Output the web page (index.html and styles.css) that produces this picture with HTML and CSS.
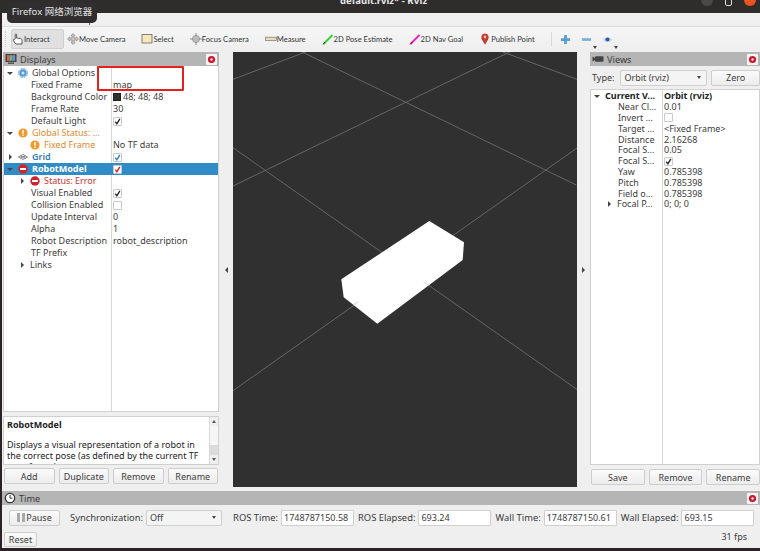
FILE: index.html
```html
<!DOCTYPE html>
<html lang="en">
<head>
<meta charset="utf-8">
<title>default.rviz* - RViz</title>
<link rel="stylesheet" href="styles.css">
</head>
<body>
<svg class="defs" width="0" height="0">
  <defs>
    <symbol id="chk" viewBox="0 0 10 10"><path d="M2.5 5.2 4.3 7.6 7.6 2" fill="none" stroke="currentColor" stroke-width="1.5"/></symbol>
    <symbol id="warn" viewBox="0 0 10 10"><circle cx="5" cy="5" r="4.6" fill="#ee9b2c"/><rect x="4.3" y="2" width="1.4" height="3.8" fill="#fff"/><rect x="4.3" y="6.6" width="1.4" height="1.4" fill="#fff"/></symbol>
    <symbol id="err" viewBox="0 0 10 10"><circle cx="5" cy="5" r="4.7" fill="#d3232a"/><rect x="2" y="4" width="6" height="2" fill="#fff"/></symbol>
    <symbol id="close" viewBox="0 0 11 11"><rect width="11" height="11" rx="1" fill="#f4f4f4"/><circle cx="5.5" cy="5.5" r="3.6" fill="#d3142a"/><circle cx="5.5" cy="5.5" r="1.2" fill="#f4f4f4"/></symbol>
  </defs>
</svg>
<div class="window">
  <header class="titlebar">
    <span class="title">default.rviz* - RViz</span>
    <span class="wbtn wmin"></span>
    <span class="wbtn wmax"></span>
    <span class="wbtn wclose"></span>
  </header>
  <nav class="menubar"><span>File</span><span>Panels</span><span>Help</span></nav>
  <div class="toolbar">
    <span class="grip"></span>
    <div class="tool pressed">
      <svg class="ticon" viewBox="0 0 12 12"><path d="M3.2 6V1.7c0-1 1.4-1 1.4 0V5l3.9.6c1 .2 1.5.8 1.5 1.7V11H3.8L1.4 7.6c-.5-.9.5-1.6 1.1-1Z" fill="#fff" stroke="#333" stroke-width=".8"/></svg>
      <span>Interact</span>
    </div>
    <div class="tool">
      <svg class="ticon" viewBox="0 0 12 12"><path d="M6 .5 8 2.6H7V5h2.400V4l2.100 2-2.100 2V7H7v2.400h1l-2 2.100-2-2.100h1V7H2.600v1L.5 6l2.100-2v1H5V2.600H4Z" fill="#c9c9c9" stroke="#777" stroke-width=".6"/></svg>
      <span>Move Camera</span>
    </div>
    <div class="tool">
      <svg class="ticon" viewBox="0 0 12 12"><rect x="1" y="1.500" width="10" height="8.500" fill="#f6e6b8" stroke="#555" stroke-width=".7"/></svg>
      <span>Select</span>
    </div>
    <div class="tool">
      <svg class="ticon" viewBox="0 0 12 12"><circle cx="6" cy="6" r="3.600" fill="#bbb" stroke="#888" stroke-width=".6"/><path d="M6 0v3M6 9v3M0 6h3M9 6h3" stroke="#888"/></svg>
      <span>Focus Camera</span>
    </div>
    <div class="tool">
      <svg class="ticon" viewBox="0 0 12 12"><rect x=".5" y="4.200" width="11" height="3.400" fill="#e9dcb4" stroke="#777" stroke-width=".7"/></svg>
      <span>Measure</span>
    </div>
    <div class="tool">
      <svg class="ticon" viewBox="0 0 12 12"><path d="M1.500 11 10.500 2" stroke="#2ed12e" stroke-width="1.800"/><path d="M1 11.500 3 9" stroke="#222" stroke-width=".8"/></svg>
      <span>2D Pose Estimate</span>
    </div>
    <div class="tool">
      <svg class="ticon" viewBox="0 0 12 12"><path d="M1.500 11 10.500 2" stroke="#f01cc4" stroke-width="1.800"/><path d="M1 11.500 3 9" stroke="#222" stroke-width=".8"/></svg>
      <span>2D Nav Goal</span>
    </div>
    <div class="tool pin">
      <svg class="ticon" viewBox="0 0 12 12"><path d="M6 11.800 2.800 6.200C1.500 3.500 3.300.5 6 .5s4.500 3 3.200 5.700Z" fill="#c53a30"/><circle cx="6" cy="4" r="1.400" fill="#eec0a8"/></svg>
      <span>Publish Point</span>
    </div>
    <span class="tsep"></span>
    <svg class="vbtn" viewBox="0 0 12 12"><path d="M4.500 1h3v3.500H11v3H7.500V11h-3V7.500H1v-3h3.500Z" fill="#5b9bd3"/></svg>
    <span class="vdrop">
      <svg class="vbtn" viewBox="0 0 12 12"><rect x="1" y="4.500" width="10" height="3" fill="#7fb0da"/></svg>
      <i class="tri"></i>
    </span>
    <span class="vdrop">
      <svg class="vbtn" viewBox="0 0 12 12"><path d="M.5 6C3 2.300 9 2.300 11.500 6 9 9.700 3 9.700.5 6Z" fill="#cfdff0"/><circle cx="6" cy="6" r="2.300" fill="#2b5f9e"/></svg>
      <i class="tri"></i>
    </span>
  </div>

  <main class="middle">
    <section class="dock left">
      <div class="dockhead">
        <svg class="hicon" viewBox="0 0 12 12"><rect x=".5" y="1" width="11" height="8" fill="#444"/><rect x="2" y="2.200" width="2.700" height="5.600" fill="#e35d5d"/><rect x="4.700" y="2.200" width="2.700" height="5.600" fill="#6dbb6d"/><rect x="7.400" y="2.200" width="2.700" height="5.600" fill="#6d8fd0"/><rect x="3" y="9.500" width="6" height="1.500" fill="#555"/></svg>
        <span class="dtitle">Displays</span>
        <svg class="dclose"><use href="#close"/></svg>
      </div>
      <div class="tree ltree">
        <div class="row"><div class="c1"><i class="arrow down"></i><svg class="ic" viewBox="0 0 10 10"><circle cx="5" cy="5" r="3.800" fill="#5b9bd3"/><circle cx="5" cy="5" r="4.600" fill="none" stroke="#5b9bd3" stroke-dasharray="1.400 1"/><circle cx="5" cy="5" r="1.500" fill="#d5e6f5"/></svg><span class="t">Global Options</span></div><div class="c2"></div></div>
        <div class="row"><div class="c1 l1"><span>Fixed Frame</span></div><div class="c2">map</div></div>
        <div class="row"><div class="c1 l1"><span>Background Color</span></div><div class="c2"><i class="swatch"></i>48; 48; 48</div></div>
        <div class="row"><div class="c1 l1"><span>Frame Rate</span></div><div class="c2">30</div></div>
        <div class="row"><div class="c1 l1"><span>Default Light</span></div><div class="c2"><span class="cb"><svg><use href="#chk"/></svg></span></div></div>
        <div class="row orange"><div class="c1"><i class="arrow down"></i><svg class="ic"><use href="#warn"/></svg><span class="t">Global Status: ...</span></div><div class="c2"></div></div>
        <div class="row"><div class="c1 st2"><svg class="ic"><use href="#warn"/></svg><span class="t orange">Fixed Frame</span></div><div class="c2">No TF data</div></div>
        <div class="row"><div class="c1"><i class="arrow right"></i><svg class="ic" viewBox="0 0 10 10"><path d="M.5 5 5 2.500 9.500 5 5 7.500Z M2.500 3.900 7.500 6.100 M7.500 3.900 2.500 6.100" fill="none" stroke="#555" stroke-width=".7"/></svg><span class="t grid">Grid</span></div><div class="c2"><span class="cb blue"><svg><use href="#chk"/></svg></span></div></div>
        <div class="row sel"><div class="c1"><i class="arrow down"></i><svg class="ic"><use href="#err"/></svg><span class="t bold">RobotModel</span></div><div class="c2"><span class="cb red"><svg><use href="#chk"/></svg></span></div></div>
        <div class="row"><div class="c1 st"><i class="arrow right sub"></i><svg class="ic"><use href="#err"/></svg><span class="t errtxt">Status: Error</span></div><div class="c2"></div></div>
        <div class="row"><div class="c1 l1"><span>Visual Enabled</span></div><div class="c2"><span class="cb"><svg><use href="#chk"/></svg></span></div></div>
        <div class="row"><div class="c1 l1"><span>Collision Enabled</span></div><div class="c2"><span class="cb"></span></div></div>
        <div class="row"><div class="c1 l1"><span>Update Interval</span></div><div class="c2">0</div></div>
        <div class="row"><div class="c1 l1"><span>Alpha</span></div><div class="c2">1</div></div>
        <div class="row"><div class="c1 l1"><span>Robot Description</span></div><div class="c2">robot_description</div></div>
        <div class="row"><div class="c1 l1"><span>TF Prefix</span></div><div class="c2"></div></div>
        <div class="row"><div class="c1 st"><i class="arrow right sub"></i><span>Links</span></div><div class="c2"></div></div>
      </div>
      <div class="desc">
        <div class="desctext">
          <p class="dname">RobotModel</p>
          <p>Displays a visual representation of a robot in the correct pose (as defined by the current TF transforms).</p>
        </div>
        <div class="scroll"><i class="up"></i><span class="track"></span><span class="thumb"></span><i class="dn"></i></div>
      </div>
      <div class="btns">
        <button class="btn">Add</button><button class="btn">Duplicate</button><button class="btn">Remove</button><button class="btn">Rename</button>
      </div>
    </section>

    <div class="split splitl"><i class="left-a"></i></div>

    <div class="viewport">
      <svg class="scene" viewBox="233 52 344 435">
        <g stroke="#727272" stroke-width=".8" fill="none">
          <path d="M233 79.300 308.300 51"/>
          <path d="M300 51 576.300 185"/>
          <path d="M233 186 511.700 51"/>
          <path d="M500 51 577 79.300"/>
          <path d="M233 147.700 577 389.500"/>
          <path d="M233 390.700 577 148"/>
        </g>
        <path d="M429.300 221 464 242.300 462.700 260 377.300 323.700 343.700 297.300 341.300 279.300Z" fill="#fff"/>
        <path d="M423.300 281.700 429 285.500M358.300 301.700 353 305" stroke="#c8c8c8" stroke-width=".7"/>
      </svg>
    </div>

    <div class="split"><i class="right-a"></i></div>

    <section class="dock right">
      <div class="dockhead">
        <svg class="hicon" viewBox="0 0 12 12"><path d="M.5 3.500v5L3 7V5Z" fill="#444"/><rect x="3" y="3.300" width="8.500" height="5.400" rx="1" fill="#444"/></svg>
        <span class="dtitle">Views</span>
        <svg class="dclose"><use href="#close"/></svg>
      </div>
      <div class="typerow">
        <span>Type:</span>
        <span class="combo vcombo">Orbit (rviz)<i class="tri"></i></span>
        <button class="btn zero">Zero</button>
      </div>
      <div class="tree rtree">
        <div class="row"><div class="c1"><i class="arrow down"></i><span class="strong">Current V...</span></div><div class="c2 strong">Orbit (rviz)</div></div>
        <div class="row"><div class="c1 l1"><span>Near Cl...</span></div><div class="c2">0.01</div></div>
        <div class="row"><div class="c1 l1"><span>Invert ...</span></div><div class="c2"><span class="cb"></span></div></div>
        <div class="row"><div class="c1 l1"><span>Target ...</span></div><div class="c2">&lt;Fixed Frame&gt;</div></div>
        <div class="row"><div class="c1 l1"><span>Distance</span></div><div class="c2">2.16268</div></div>
        <div class="row"><div class="c1 l1"><span>Focal S...</span></div><div class="c2">0.05</div></div>
        <div class="row"><div class="c1 l1"><span>Focal S...</span></div><div class="c2"><span class="cb"><svg><use href="#chk"/></svg></span></div></div>
        <div class="row"><div class="c1 l1"><span>Yaw</span></div><div class="c2">0.785398</div></div>
        <div class="row"><div class="c1 l1"><span>Pitch</span></div><div class="c2">0.785398</div></div>
        <div class="row"><div class="c1 l1"><span>Field o...</span></div><div class="c2">0.785398</div></div>
        <div class="row"><div class="c1 st"><i class="arrow right sub"></i><span>Focal P...</span></div><div class="c2">0; 0; 0</div></div>
      </div>
      <div class="btns rbtns">
        <button class="btn">Save</button><button class="btn">Remove</button><button class="btn">Rename</button>
      </div>
    </section>
  </main>

  <section class="timedock">
    <div class="dockhead timehead">
      <svg class="hicon" viewBox="0 0 12 12"><circle cx="6" cy="6" r="4.700" fill="#fff" stroke="#333" stroke-width="1.200"/><path d="M6 3v3.200h2.500" fill="none" stroke="#333"/></svg>
      <span class="dtitle">Time</span>
      <svg class="dclose"><use href="#close"/></svg>
    </div>
    <div class="timerow">
      <button class="btn pause"><i class="bars"></i>Pause</button>
      <span class="lsync">Synchronization:</span>
      <span class="combo tcombo">Off<i class="tri"></i></span>
      <span class="lab first">ROS Time:</span><span class="field">1748787150.58</span>
      <span class="lab">ROS Elapsed:</span><span class="field">693.24</span>
      <span class="lab">Wall Time:</span><span class="field">1748787150.61</span>
      <span class="lab">Wall Elapsed:</span><span class="field">693.15</span>
    </div>
    <div class="statusrow">
      <button class="btn reset">Reset</button>
      <span class="fps">31 fps</span>
    </div>
  </section>
</div>
<div class="tooltip">Firefox 网络浏览器</div>
<div class="annot"></div>
</body>
</html>
```
FILE: styles.css
```css
* { box-sizing: border-box; }
html, body { margin: 0; width: 760px; height: 551px; overflow: hidden; background: #2b2127; }
body { position: relative; font: 9px "Noto Sans", "Noto Sans CJK SC", sans-serif; color: #3c3c3c; }
.defs { position: absolute; }
.window { height: 548px; margin-left: 2px; display: flex; flex-direction: column; background: #efefef; }

.titlebar { height: 13px; flex: none; margin-left: -2px; background: #2f2c2c; color: #e8e8e8; display: flex; overflow: hidden; position: relative; }
.title { position: absolute; left: 340px; top: -6px; font-size: 9.500px; font-weight: 700; line-height: 14px; white-space: nowrap; }
.wbtn { position: absolute; top: -6px; width: 12px; height: 12px; border-radius: 50%; }
.wmin { left: 701px; background: #4b4848; }
.wmax { left: 723px; background: #2f2c2c; border: 1.500px solid #ddd; border-radius: 2px; width: 7px; height: 9px; top: -3px; margin-left: 2px; }
.wclose { left: 744px; background: #e95420; }

.menubar { height: 14px; flex: none; display: flex; gap: 11px; padding-left: 8px; line-height: 14px; background: #f0f0f0; border-bottom: 1px solid #dcdcdc; }

.toolbar { height: 24px; flex: none; display: flex; align-items: center; background: linear-gradient(#f6f6f6, #eeeeee); padding-left: 3px; font-family: Lato, "Noto Sans", sans-serif; font-size: 7.600px; color: #333; }
.grip { width: 3px; height: 16px; margin-right: 3px; border-left: 1px dotted #ccc; }
.tool { display: flex; align-items: center; white-space: nowrap; margin-right: 16px; height: 20px; }
.tool.pressed { width: 53px; margin-right: 3px; background: #e0e0e0; border: 1px solid #cfcfcf; border-radius: 2px; }
.ticon { width: 12px; height: 12px; flex: none; }
.tsep { width: 1px; height: 14px; background: #d8d8d8; margin: 0 8px 0 0; }
.vbtn { width: 11px; height: 11px; flex: none; }
.vdrop { position: relative; display: flex; margin-left: 10px; }
.vdrop .tri { position: absolute; right: -5px; bottom: -4px; }
.tri { display: block; width: 0; height: 0; border-left: 2.500px solid transparent; border-right: 2.500px solid transparent; border-top: 3px solid #444; }

.middle { flex: 1; min-height: 0; display: flex; padding: 1px 0 4px 1px; }
.dock { display: flex; flex-direction: column; }
.dock.left { width: 216px; flex: none; }
.dock.right { flex: 1; min-width: 0; }
.dockhead { height: 14px; flex: none; background: #b5b5b5; display: flex; align-items: center; padding: 0 2px; }
.hicon { width: 12px; height: 12px; flex: none; margin-right: 3px; }
.dtitle { font-size: 9.200px; flex: 1; }
.dclose { width: 11px; height: 11px; flex: none; }

.tree { flex: 1; min-height: 0; background: #fff linear-gradient(#d8d8d8, #d8d8d8) no-repeat; background-size: 1px 100%; border: 1px solid #d0d0d0; border-top: 0; }
.ltree { --col: 108px; padding-top: 1px; background-position: 107px 0; }
.rtree { --col: 72px; margin-top: 3px; padding-top: 1px; border-top: 1px solid #d0d0d0; background-position: 71px 0; }
.row { height: 12px; display: flex; line-height: 12px; white-space: nowrap; }
.rtree .row { height: 10.800px; }
.c1 { width: var(--col); flex: none; display: flex; align-items: center; padding-left: 3px; }
.c2 { flex: 1; padding-left: 1px; display: flex; align-items: center; }
.l1 { padding-left: 27px; }
.st { padding-left: 15px; }
.st2 { padding-left: 26px; }
.arrow { display: block; width: 0; height: 0; flex: none; }
.arrow.down { border-left: 3px solid transparent; border-right: 3px solid transparent; border-top: 3px solid #444; margin-right: 5px; }
.arrow.right { border-top: 3px solid transparent; border-bottom: 3px solid transparent; border-left: 3px solid #444; margin: 0 6px 0 2px; }
.ic { width: 10px; height: 10px; flex: none; }
.t { margin-left: 4px; }
.row.orange .t, .t.orange { color: #e08a2e; }
.grid { color: #2f78bd; font-weight: 600; }
.bold { font-weight: 700; }
.strong { font-weight: 700; color: #222; }
.errtxt { color: #d0312d; }
.row.sel { background: #308cc6; color: #fff; }
.swatch { width: 8px; height: 8px; background: #303030; border: 1px solid #222; margin-right: 2px; }
.cb { width: 9px; height: 9px; background: #fff; border: 1px solid #c9c9c9; border-radius: 1px; color: #222; display: block; }
.cb svg { display: block; width: 9px; height: 9px; margin: -1px; }
.cb.blue { color: #2f78bd; }
.cb.red { color: #d0212a; }

.desc { height: 49px; flex: none; margin-top: 4px; background: #fff; border: 1px solid #d0d0d0; display: flex; overflow: hidden; }
.desctext { flex: 1; padding: 2px 3px; line-height: 11px; color: #222; }
.desctext p { margin: 0 0 9px; }
.dname { font-weight: 700; }
.scroll { width: 9px; flex: none; background: #efefef; border-left: 1px solid #d8d8d8; display: flex; flex-direction: column; align-items: center; padding: 3px 0; }
.scroll .up { width: 0; height: 0; border-left: 2.500px solid transparent; border-right: 2.500px solid transparent; border-bottom: 3px solid #555; }
.scroll .dn { width: 0; height: 0; border-left: 2.500px solid transparent; border-right: 2.500px solid transparent; border-top: 3px solid #555; }
.track { flex: 1; align-self: stretch; background: #f6f6f6; margin-top: 3px; }
.thumb { height: 10px; align-self: stretch; background: #dcdcdc; margin-bottom: 3px; }

.btns { display: flex; gap: 4px; margin: 3px 0 3px 1px; padding-right: 1px; }
.btn { font: inherit; color: #3c3c3c; height: 16px; padding: 0; border: 1px solid #cdcdcd; border-radius: 2px; background: linear-gradient(#fbfbfb, #ececec); flex: 1; }
.rbtns { margin: 4px 0 2px 1px; padding-right: 0; }

.split { width: 13px; flex: none; display: flex; align-items: center; justify-content: center; }
.splitl { width: 14px; }
.left-a { display: block; border-top: 3px solid transparent; border-bottom: 3px solid transparent; border-right: 3px solid #444; }
.right-a { display: block; border-top: 3px solid transparent; border-bottom: 3px solid transparent; border-left: 3px solid #444; }
.viewport { width: 344px; flex: none; background: #303030; }
.scene { display: block; width: 344px; height: 100%; }

.typerow { display: flex; align-items: center; gap: 4px; height: 17px; margin-top: 3px; padding-left: 2px; }
.combo { flex: none; display: flex; align-items: center; justify-content: space-between; height: 16px; background: #f4f4f4; border: 1px solid #cfcfcf; border-radius: 2px; padding: 0 5px 0 3px; }
.vcombo { width: 87px; margin-left: 2px; }
.zero { flex: 1; }

.timedock { flex: none; }
.timehead { height: 14px; }
.timerow { display: flex; align-items: center; height: 15px; margin-top: 5px; padding-left: 7px; white-space: nowrap; }
.pause { flex: none; width: 51px; display: flex; align-items: center; justify-content: center; gap: 1px; height: 16px; }
.bars { width: 8px; height: 9px; background: linear-gradient(90deg, #aaa 0 3px, transparent 3px 5px, #aaa 5px 8px); }
.lsync { margin-left: 10px; font-size: 9.400px; }
.tcombo { width: 76px; margin-left: 3px; }
.lab { margin-left: 4px; font-size: 9.400px; }
.lab.first { margin-left: 11px; }
.lab + .field { margin-left: 3px; }
.field { flex: none; width: 73px; height: 16px; background: #fff; border: 1px solid #cfcfcf; border-radius: 1px; padding-left: 2px; line-height: 14px; }
.statusrow { display: flex; align-items: flex-start; justify-content: space-between; height: 16px; margin-top: 7px; padding-right: 13px; padding-left: 2px; }
.reset { flex: none; width: 33px; height: 15px; }
.fps { line-height: 12px; margin-top: -1px; }

.tooltip { position: absolute; left: 7px; top: 1px; width: 90px; height: 22px; background: #302e2e; color: #e6e6e6; border-radius: 5px; font-size: 9.500px; line-height: 22px; text-align: center; white-space: nowrap; }
.annot { position: absolute; left: 97px; top: 66px; width: 87px; height: 25px; border: 2.500px solid #e6211d; border-radius: 1px; }
```
